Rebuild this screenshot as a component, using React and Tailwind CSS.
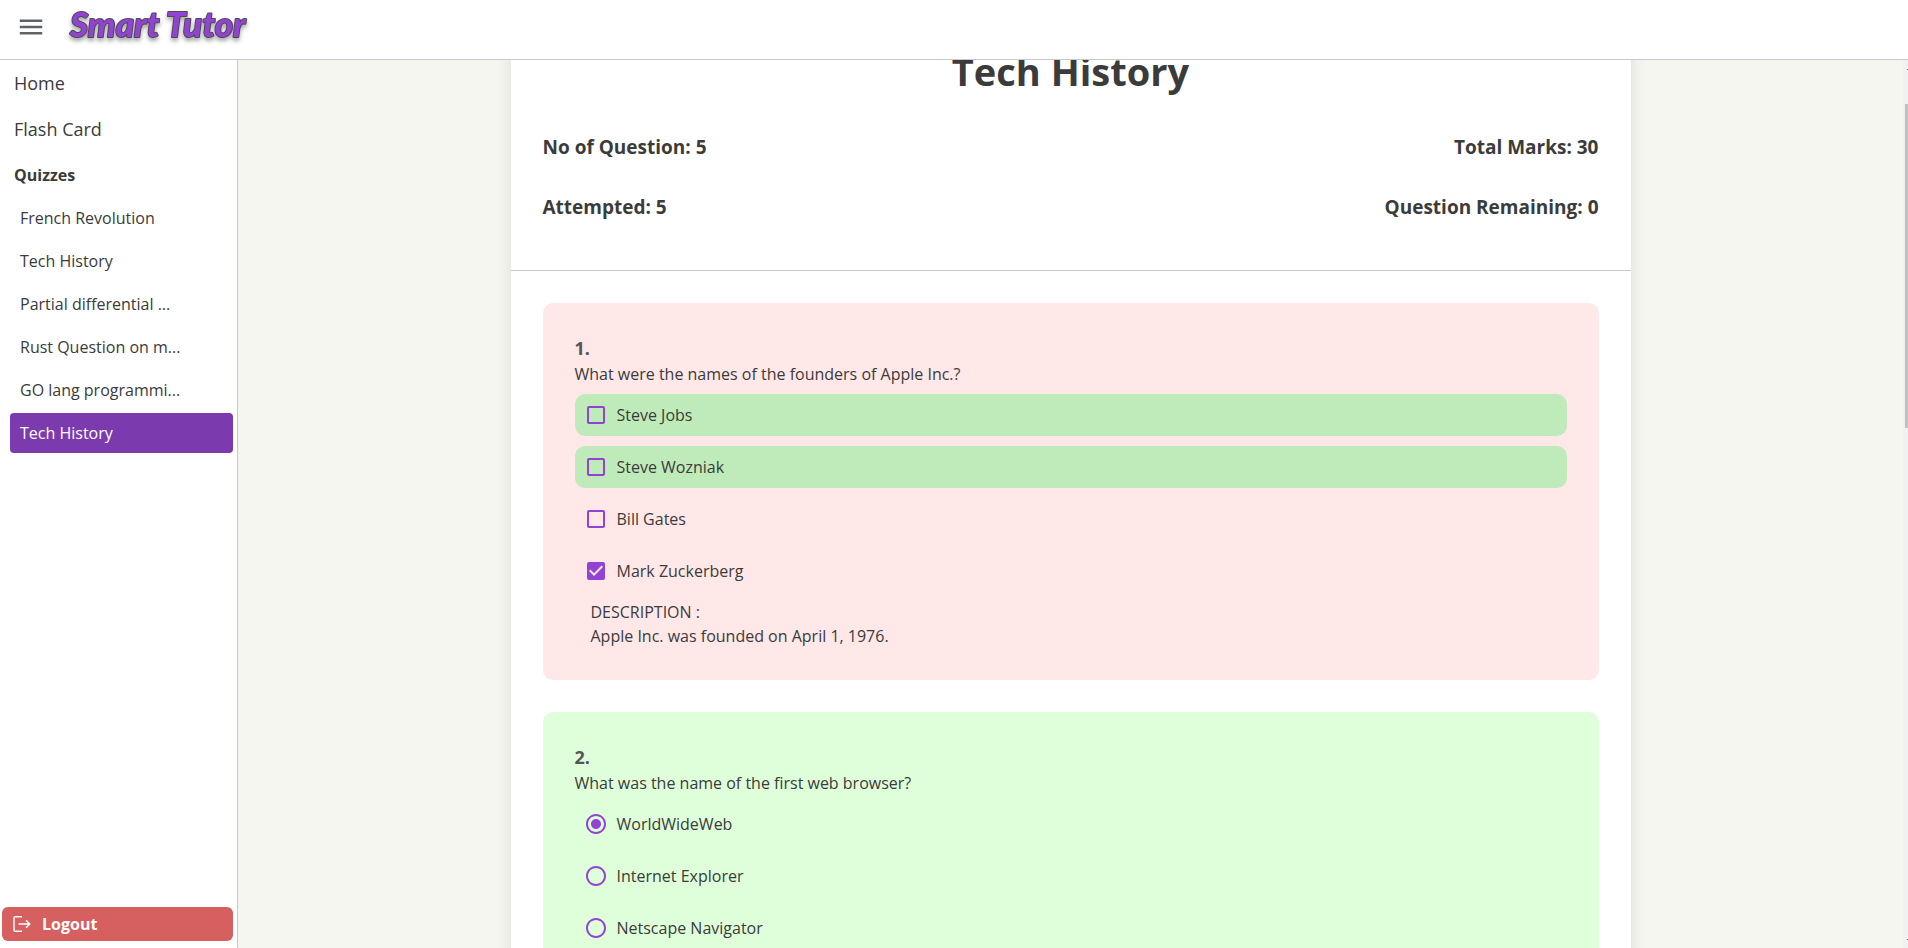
import { useLayoutEffect, useRef, useState } from "react";
import {
  MdCheckBox,
  MdCheckBoxOutlineBlank,
  MdMenu,
  MdRadioButtonChecked,
  MdRadioButtonUnchecked,
} from "react-icons/md";

const quizzes = [
  "French Revolution",
  "Tech History",
  "Partial differential ...",
  "Rust Question on m...",
  "GO lang programmi...",
  "Tech History",
];

const questions = [
  {
    id: 1,
    type: "checkbox",
    correct: false,
    text: "What were the names of the founders of Apple Inc.?",
    options: [
      { label: "Steve Jobs", answer: true },
      { label: "Steve Wozniak", answer: true },
      { label: "Bill Gates" },
      { label: "Mark Zuckerberg" },
    ],
    chosen: [3],
    description: "Apple Inc. was founded on April 1, 1976.",
  },
  {
    id: 2,
    type: "radio",
    correct: true,
    text: "What was the name of the first web browser?",
    options: [
      { label: "WorldWideWeb" },
      { label: "Internet Explorer" },
      { label: "Netscape Navigator" },
    ],
    chosen: [0],
  },
];

function Logo() {
  return (
    <a href="#home" aria-label="Smart Tutor" className="ml-6 flex h-12 items-center">
      <svg width="184" height="44" viewBox="0 0 184 44" className="overflow-visible">
        <text
          x="0"
          y="35"
          className="fill-[#9343d4] stroke-[#4b4b52] font-['Lato',sans-serif] text-[35px] font-black italic [paint-order:stroke] [stroke-linejoin:round] [stroke-width:2px] drop-shadow-[0_3px_2px_rgba(0,0,0,0.35)]"
        >
          Smart Tutor
        </text>
      </svg>
    </a>
  );
}

function LogoutIcon() {
  return (
    <svg width="20" height="20" viewBox="0 0 20 20" fill="none" stroke="currentColor" strokeWidth="1.4" aria-hidden="true">
      <path d="M10 2.7H3.2a1.2 1.2 0 0 0-1.2 1.2v12.2a1.2 1.2 0 0 0 1.2 1.2H10" />
      <path d="M6.5 10h11.2M14 6.2 17.8 10 14 13.8" />
    </svg>
  );
}

function Sidebar() {
  return (
    <aside className="flex w-[238px] shrink-0 flex-col border-r border-[#c9c9d1] bg-white">
      <nav className="flex flex-col">
        <a href="#home" className="px-3.5 py-2 text-[18px] leading-[30px]">Home</a>
        <a href="#flash" className="px-3.5 py-2 text-[18px] leading-[30px]">Flash Card</a>
        <h2 className="px-3.5 py-2 text-base leading-[30px] font-bold">Quizzes</h2>
        <ul className="flex flex-col gap-[3px] pr-1 pl-2.5">
          {quizzes.map((name, i) => (
            <li key={i}>
              <a
                href={"#quiz-" + i}
                className={
                  i === 5
                    ? "block rounded bg-[#7c3aaf] px-2.5 py-2 leading-6 text-white"
                    : "block rounded px-2.5 py-2 leading-6"
                }
              >
                {name}
              </a>
            </li>
          ))}
        </ul>
      </nav>
      <button
        type="button"
        className="mt-auto mr-1 mb-[7px] ml-0.5 flex h-[34px] items-center gap-2.5 rounded-md bg-[#d65f5f] px-2.5 font-bold text-white"
      >
        <LogoutIcon />
        Logout
      </button>
    </aside>
  );
}

function Option({ question, option, checked, onChange }) {
  const radio = question.type === "radio";
  const Icon = radio
    ? checked ? MdRadioButtonChecked : MdRadioButtonUnchecked
    : checked ? MdCheckBox : MdCheckBoxOutlineBlank;
  return (
    <label
      className={
        option.answer
          ? "flex h-[42px] cursor-pointer items-center gap-[9px] rounded-[10px] bg-[#bfebba] px-[9px]"
          : "flex h-[42px] cursor-pointer items-center gap-[9px] rounded-[10px] px-[9px]"
      }
    >
      <span className="relative size-6 text-[#9343d4]">
        <Icon className="size-6" aria-hidden="true" />
        <input
          type={question.type}
          name={"question-" + question.id}
          checked={checked}
          onChange={onChange}
          className="absolute inset-0 size-full cursor-pointer opacity-0"
        />
      </span>
      <span>{option.label}</span>
    </label>
  );
}

function Question({ question }) {
  const [chosen, setChosen] = useState(question.chosen);
  const pick = (i) =>
    setChosen((prev) =>
      question.type === "radio"
        ? [i]
        : prev.includes(i)
          ? prev.filter((x) => x !== i)
          : [...prev, i]
    );
  return (
    <section className={question.correct ? "rounded-[10px] bg-[#deffd9] p-8" : "rounded-[10px] bg-[#ffe8e7] p-8"}>
      <h3 className="text-[18px] leading-[27px] font-bold text-[#555]">{question.id}.</h3>
      <p className="mb-2 leading-6">{question.text}</p>
      <div className="flex flex-col gap-2.5">
        {question.options.map((option, i) => (
          <Option
            key={i}
            question={question}
            option={option}
            checked={chosen.includes(i)}
            onChange={() => pick(i)}
          />
        ))}
      </div>
      {question.description && (
        <div className="mt-2 px-4 leading-6">
          <p>DESCRIPTION :</p>
          <p>{question.description}</p>
        </div>
      )}
    </section>
  );
}

function ScrollTrack() {
  return (
    <div className="flex w-[5px] shrink-0 flex-col items-end bg-[#f1f1f1]" aria-hidden="true">
      <span className="mt-[9px] h-px w-px bg-[#505050]" />
      <span className="mt-[34px] h-[324px] w-[3px] bg-[#c1c1c1]" />
      <span className="mt-auto mb-2 h-px w-px bg-[#505050]" />
    </div>
  );
}

export default function App() {
  const scroller = useRef(null);

  useLayoutEffect(() => {
    scroller.current.scrollTop = 66;
  }, []);

  return (
    <div className="flex h-screen flex-col overflow-hidden bg-white font-['Open_Sans',sans-serif] text-base text-[#3b3b3b]">
      <header className="flex h-[60px] shrink-0 items-start border-b border-[#c9c9d1] pl-4">
        <button type="button" aria-label="Menu" className="mt-3 text-[#5f6368]">
          <MdMenu className="size-[30px]" />
        </button>
        <Logo />
      </header>
      <div className="flex min-h-0 flex-1">
        <Sidebar />
        <main
          ref={scroller}
          className="min-w-0 flex-1 overflow-y-auto bg-[#f5f6f0] px-8 pt-8 [scrollbar-width:none]"
        >
          <article className="mx-auto max-w-[1120px] bg-white shadow-[0_0_16px_rgba(0,0,0,0.1)]">
            <header className="border-b border-[#c9c9d1] px-8 pt-4 pb-12">
              <h1 className="mb-8 text-center text-[38px] leading-[58px] font-bold">Tech History</h1>
              <dl className="flex flex-col gap-[30px] text-[19px] leading-[30px] font-bold">
                <div className="flex justify-between">
                  <dt>No of Question: 5</dt>
                  <dd>Total Marks: 30</dd>
                </div>
                <div className="flex justify-between">
                  <dt>Attempted: 5</dt>
                  <dd>Question Remaining: 0</dd>
                </div>
              </dl>
            </header>
            <div className="flex flex-col gap-8 p-8">
              {questions.map((q) => (
                <Question key={q.id} question={q} />
              ))}
            </div>
          </article>
        </main>
        <ScrollTrack />
      </div>
    </div>
  );
}
